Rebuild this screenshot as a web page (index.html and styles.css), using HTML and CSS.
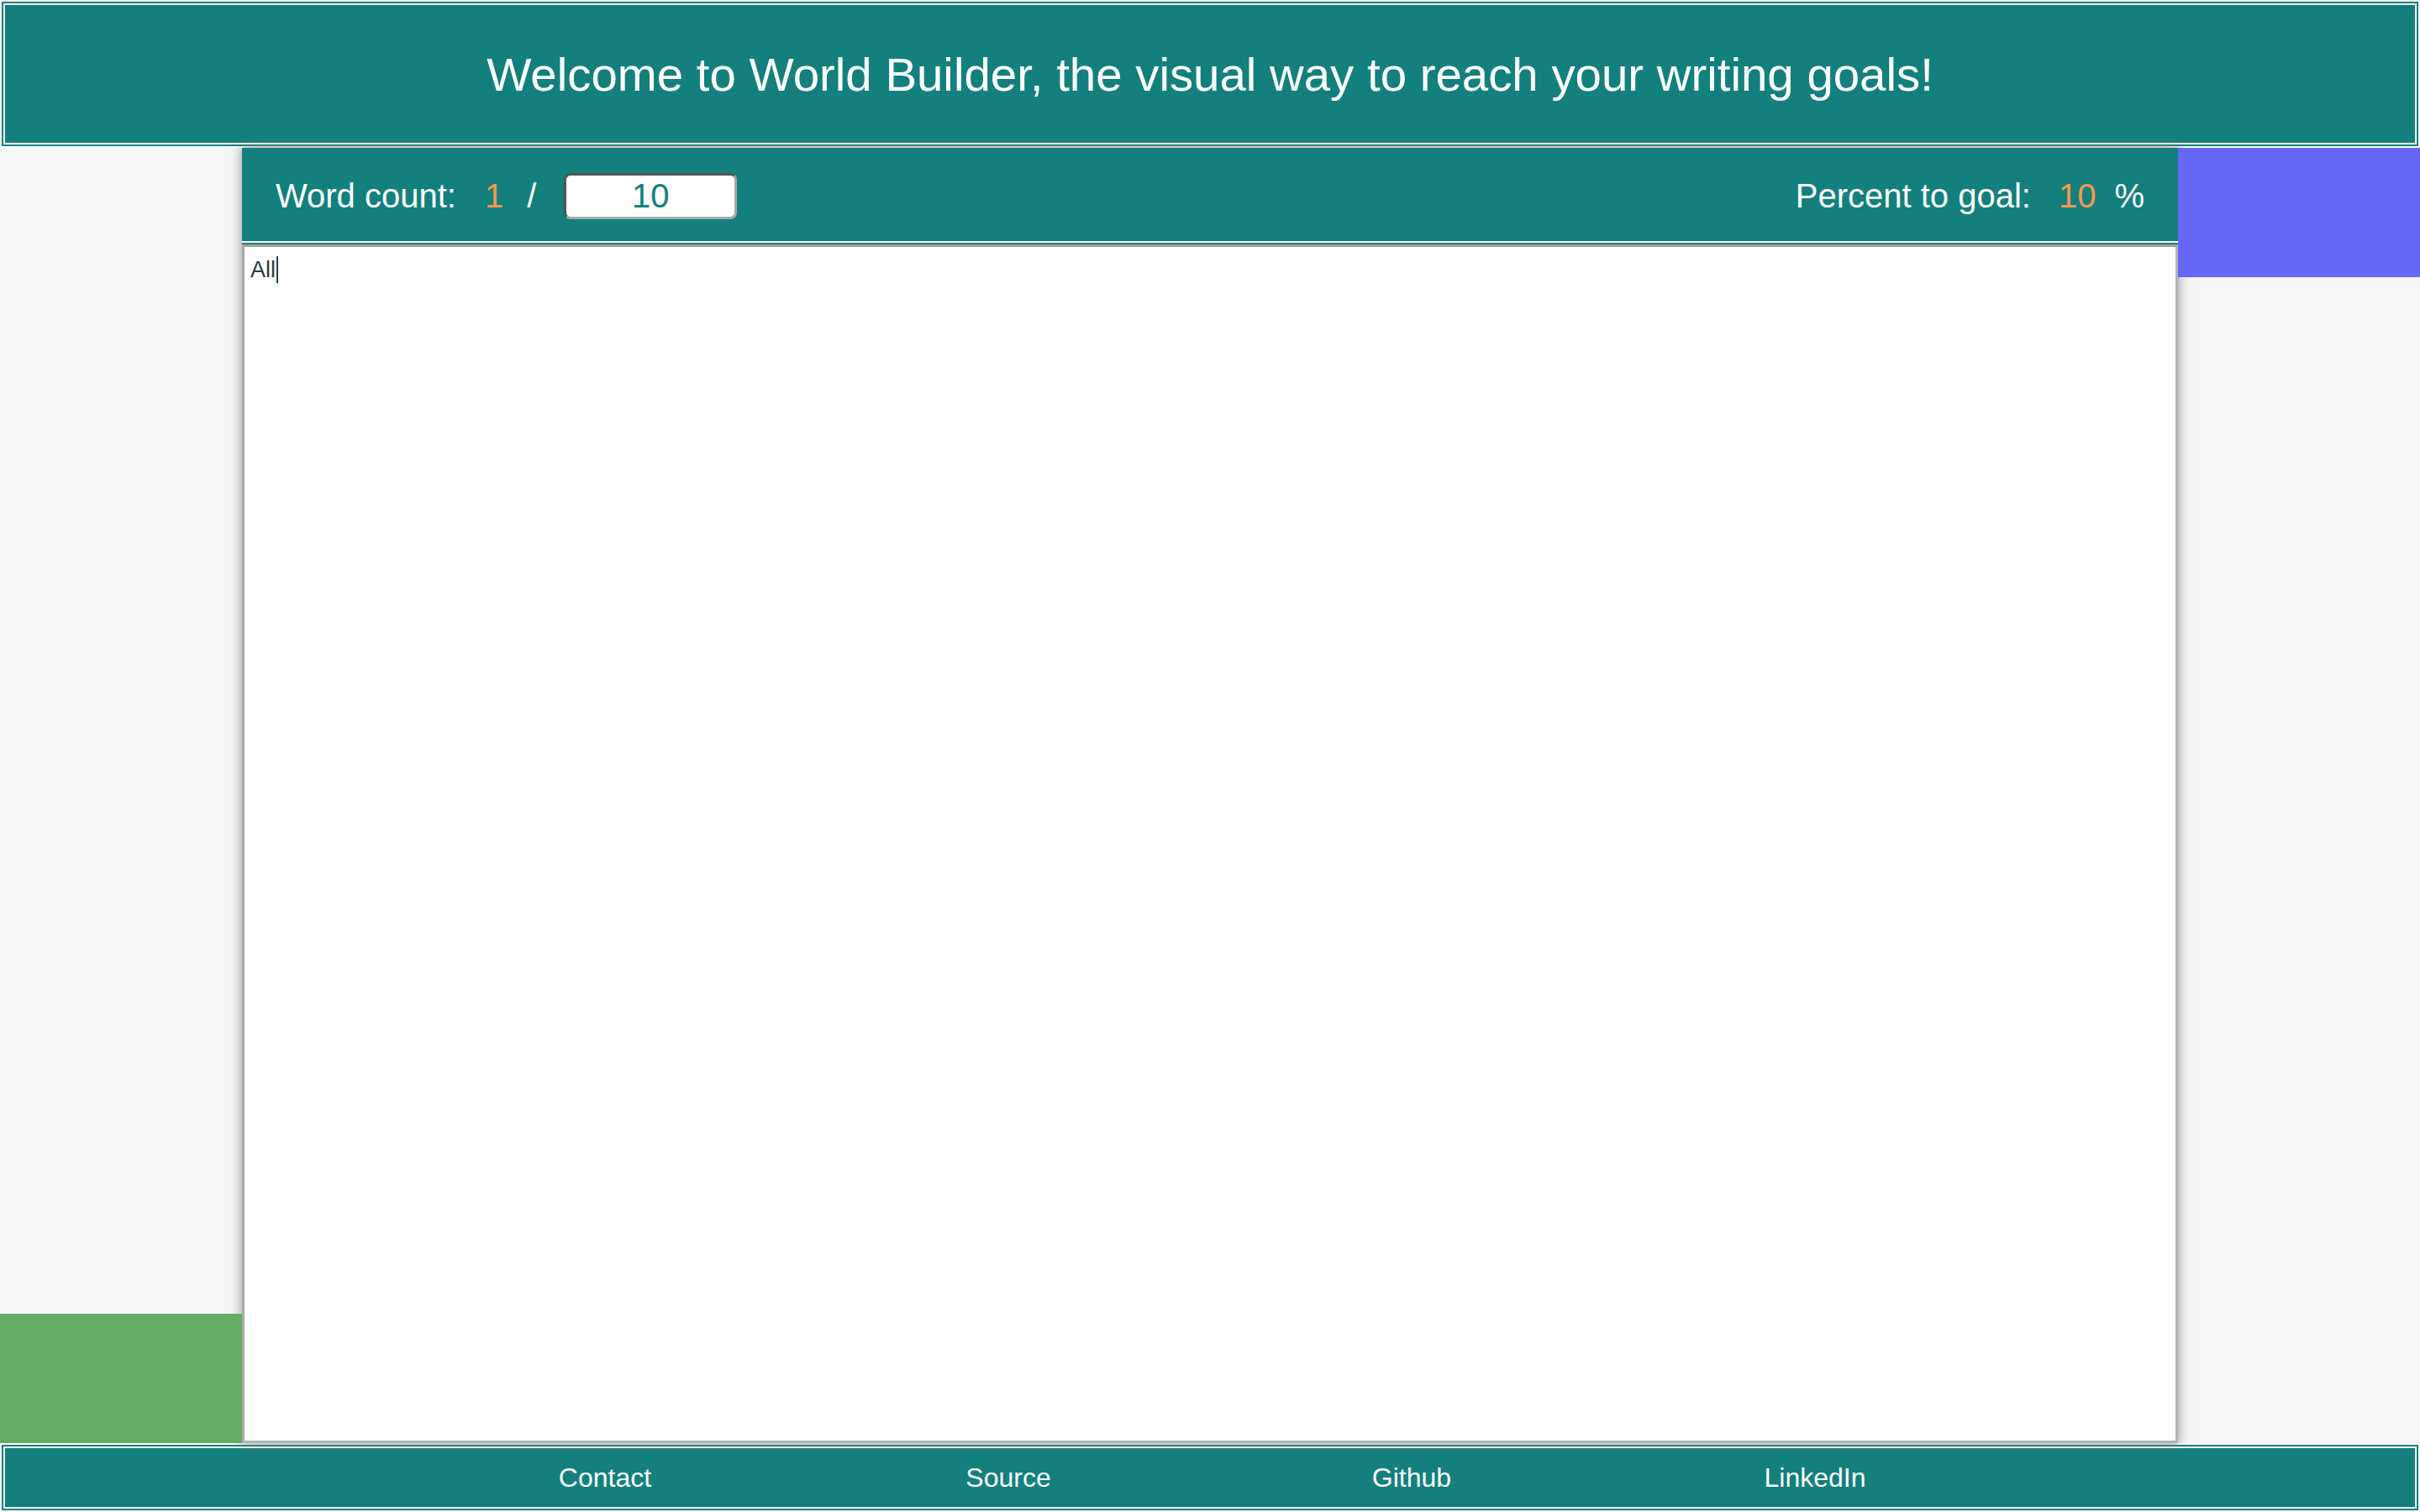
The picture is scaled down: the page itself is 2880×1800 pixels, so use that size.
FILE: index.html
```html
<!DOCTYPE html>
<html lang="en">
<head>
<meta charset="utf-8">
<title>World Builder</title>
<link rel="stylesheet" href="styles.css">
</head>
<body>
  <header class="site-header">
    <h1 class="site-title">Welcome to World Builder, the visual way to reach your writing goals!</h1>
  </header>

  <div class="world">
    <div class="side side-left">
      <div class="block block-green"></div>
    </div>

    <main class="writer">
      <div class="stats-bar">
        <div class="stat stat-count">
          <span class="stat-label">Word count:</span>
          <span class="stat-value">1</span>
          <span class="stat-sep">/</span>
          <input class="goal-input" type="text" value="10" aria-label="Word goal">
        </div>
        <div class="stat stat-percent">
          <span class="stat-label">Percent to goal:</span>
          <span class="stat-value">10</span>
          <span class="stat-unit">%</span>
        </div>
      </div>
      <div class="editor" role="textbox" aria-multiline="true">All<span class="caret"></span></div>
    </main>

    <div class="side side-right">
      <div class="block block-purple"></div>
    </div>
  </div>

  <footer class="site-footer">
    <nav class="footer-nav">
      <a class="footer-link" href="#">Contact</a>
      <a class="footer-link" href="#">Source</a>
      <a class="footer-link" href="#">Github</a>
      <a class="footer-link" href="#">LinkedIn</a>
    </nav>
  </footer>
</body>
</html>
```

FILE: styles.css
```css
html, body {
  margin: 0;
  padding: 0;
  height: 100%;
  background: #ffffff;
}

body {
  display: flex;
  flex-direction: column;
  font-family: "Liberation Sans", Arial, Helvetica, sans-serif;
  color: #ffffff;
}

.site-header {
  margin: 2px;
  height: 172px;
  box-sizing: border-box;
  border: 2px solid #13807d;
  box-shadow: inset 0 0 0 2px #ffffff;
  background: #13807d;
  display: flex;
  align-items: center;
  justify-content: center;
}

.site-title {
  margin: 0;
  font-size: 56.4px;
  font-weight: normal;
  letter-spacing: 0;
}

.world {
  flex: 1;
  display: grid;
  grid-template-columns: 288px 1fr 288px;
  background: #f5f5f5;
  min-height: 0;
}

.side {
  display: flex;
  flex-direction: column;
  position: relative;
  z-index: 2;
}

.side-left {
  justify-content: flex-end;
}

.side-right {
  justify-content: flex-start;
}

.block {
  height: 154px;
}

.block-green {
  background: #64ad63;
}

.block-purple {
  background: #6667f6;
}

.writer {
  display: flex;
  flex-direction: column;
  position: relative;
  z-index: 1;
  box-shadow: 0 0 12px 1px rgba(130, 130, 130, 0.75);
  min-height: 0;
}

.stats-bar {
  height: 115px;
  box-sizing: border-box;
  background: #13807d;
  border-bottom: 2px solid #13807d;
  box-shadow: inset 0 -2px 0 #ffffff;
  display: flex;
  align-items: center;
  justify-content: space-between;
  padding: 2px 40px 0 40px;
  font-size: 40px;
}

.stat {
  display: flex;
  align-items: center;
}

.stat-value {
  color: #f6984f;
}

.stat-count .stat-value {
  margin-left: 34px;
}

.stat-sep {
  margin-left: 28px;
}

.goal-input {
  margin-left: 33px;
  width: 206px;
  height: 55px;
  box-sizing: border-box;
  border: 3px inset #a8a8a8;
  border-radius: 8px;
  background: #ffffff;
  color: #13807d;
  font-family: "Liberation Sans", Arial, Helvetica, sans-serif;
  font-size: 40px;
  text-align: center;
  padding: 0;
}

.stat-percent .stat-value {
  margin-left: 33px;
}

.stat-unit {
  margin-left: 22px;
}

.editor {
  flex: 1;
  background: #ffffff;
  border: 3px solid #b4b4b4;
  border-top-color: #a0a0a0;
  border-left-color: #a8a8a8;
  padding: 11px 7px 6px 7px;
  color: #2c3c3c;
  font-size: 27px;
  line-height: 32px;
}

.caret {
  display: inline-block;
  width: 2px;
  height: 32px;
  background: #2c3c3c;
  vertical-align: top;
  margin-left: 1px;
}

.site-footer {
  margin: 2px;
  height: 78px;
  box-sizing: border-box;
  border: 2px solid #13807d;
  box-shadow: inset 0 0 0 2px #ffffff;
  background: #13807d;
  display: flex;
  align-items: center;
  justify-content: center;
}

.footer-nav {
  display: flex;
  justify-content: center;
}

.footer-link {
  width: 480px;
  text-align: center;
  color: #ffffff;
  text-decoration: none;
  font-size: 32px;
}
```
